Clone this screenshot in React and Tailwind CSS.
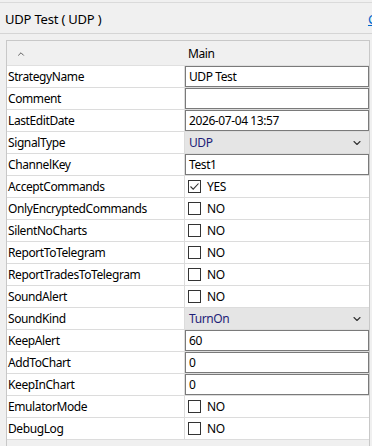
import { ChevronDown, ChevronUp } from 'lucide-react';

// rows of the property grid
const rows = [
    { name: 'StrategyName', type: 'text', value: 'UDP Test' },
    { name: 'Comment', type: 'text', value: '' },
    { name: 'LastEditDate', type: 'text', value: '2026-07-04 13:57' },
    { name: 'SignalType', type: 'combo', value: 'UDP' },
    { name: 'ChannelKey', type: 'text', value: 'Test1' },
    { name: 'AcceptCommands', type: 'check', value: true },
    { name: 'OnlyEncryptedCommands', type: 'check', value: false },
    { name: 'SilentNoCharts', type: 'check', value: false },
    { name: 'ReportToTelegram', type: 'check', value: false },
    { name: 'ReportTradesToTelegram', type: 'check', value: false },
    { name: 'SoundAlert', type: 'check', value: false },
    { name: 'SoundKind', type: 'combo', value: 'TurnOn' },
    { name: 'KeepAlert', type: 'text', value: '60' },
    { name: 'AddToChart', type: 'text', value: '0' },
    { name: 'KeepInChart', type: 'text', value: '0' },
    { name: 'EmulatorMode', type: 'check', value: false },
    { name: 'DebugLog', type: 'check', value: false },
];

const Value = ({ row }) => {
    if (row.type === 'text') {
        return (
            <div className="h-full border border-[#7a7a7a] bg-white pl-[3px] pt-[1px] flex items-center">
                {row.value}
            </div>
        );
    }
    if (row.type === 'combo') {
        return (
            <div className="h-full bg-[#e5e5e5] pl-[4px] pr-[6px] pt-[1px] flex items-center justify-between text-[#1e1e78]">
                <span>{row.value}</span>
                <ChevronDown size={12} strokeWidth={2.2} className="text-[#333]" />
            </div>
        );
    }
    return (
        <div className="h-full pl-[3px] flex items-center gap-[6px]">
            <div className="w-[13px] h-[13px] border border-[#333] bg-white flex items-center justify-center">
                {row.value && (
                    <svg width="11" height="11" viewBox="0 0 11 11">
                        <path d="M1.5 5.5 L4.2 8.2 L9.5 2.5" fill="none" stroke="#333" strokeWidth="1.1" />
                    </svg>
                )}
            </div>
            <span className="pt-[1px]">{row.value ? 'YES' : 'NO'}</span>
        </div>
    );
};

const App = () => {
    return (
        <div
            className="w-[372px] h-[446px] overflow-hidden bg-[#f0f0f0] text-[12px] tracking-[-0.4px] text-black"
            style={{ fontFamily: '"Noto Sans", "Open Sans", sans-serif' }}
        >
            <div className="mt-[2px] border-t border-[#dadada]" />
            <div className="h-[31px] flex items-center justify-between pl-[5px] pt-[3px] border-b border-[#d5d5d5] text-[13px] tracking-[-0.2px]">
                <span className="whitespace-pre">UDP Test ( UDP )</span>
                <span className="text-[#0066cc] underline mr-[-4px]">C</span>
            </div>
            <div className="mt-[6px] ml-[6px] w-[364px] h-[420px] border border-[#c8c8c8] bg-[#f0f0f0]">
                <div className="h-[25px] flex items-center border-b border-[#e0e0e0]">
                    <div className="w-[178px] pl-[9px] pt-[2px] flex items-center">
                        <ChevronUp size={10} strokeWidth={2} className="text-[#444]" />
                    </div>
                    <div className="pl-[3px] pt-[1px]">Main</div>
                </div>
                {rows.map((row) => (
                    <div key={row.name} className="h-[22px] flex border-b border-[#dcdcdc]">
                        <div className="w-[178px] bg-white pl-[1px] pt-[1px] flex items-center border-r border-[#dcdcdc] whitespace-nowrap">
                            {row.name}
                        </div>
                        <div className="flex-1 bg-white">
                            <Value row={row} />
                        </div>
                    </div>
                ))}
            </div>
        </div>
    );
};

export default App;
